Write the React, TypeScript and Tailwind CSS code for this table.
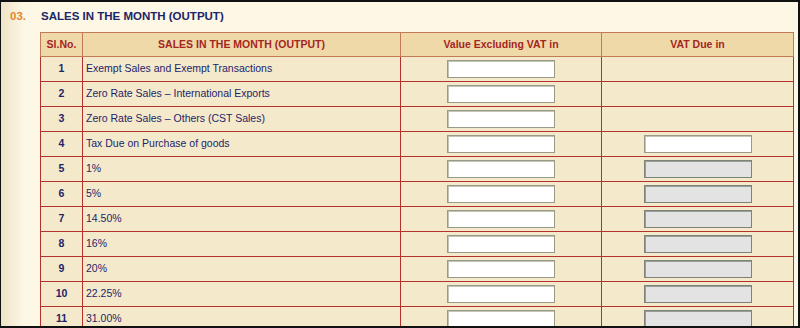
import React from "react";

type Row = { no: number; label: string; vatInput?: "open" | "locked" };

const rows: Row[] = [
  { no: 1, label: "Exempt Sales and Exempt Transactions" },
  { no: 2, label: "Zero Rate Sales \u2013 International Exports" },
  { no: 3, label: "Zero Rate Sales \u2013 Others (CST Sales)" },
  { no: 4, label: "Tax Due on Purchase of goods", vatInput: "open" },
  { no: 5, label: "1%", vatInput: "locked" },
  { no: 6, label: "5%", vatInput: "locked" },
  { no: 7, label: "14.50%", vatInput: "locked" },
  { no: 8, label: "16%", vatInput: "locked" },
  { no: 9, label: "20%", vatInput: "locked" },
  { no: 10, label: "22.25%", vatInput: "locked" },
  { no: 11, label: "31.00%", vatInput: "locked" },
];

function Field({ locked = false }: { locked?: boolean }) {
  return (
    <input
      type="text"
      disabled={locked}
      className={
        "block mx-auto w-[108px] h-[18px] border outline-none " +
        (locked
          ? "bg-[#e3e3e3] border-[#7d837a] shadow-[inset_1px_1px_0_#9a9f96]"
          : "bg-white border-[#9a9a88] shadow-[inset_1px_1px_0_#c4c4b4]")
      }
    />
  );
}

export default function App() {
  return (
    <div
      className="w-[800px] h-[328px] overflow-hidden box-border border-t-2 border-b-2 border-l border-r-2 border-[#111] bg-[#fdf7e6]"
      style={{ fontFamily: '"Liberation Sans", Arial, sans-serif' }}
    >
      <div className="h-full bg-gradient-to-r from-[#efe4c6] via-[#fdf7e6] via-[3%] to-[#fdf7e6]">
        {/* section title */}
        <div className="flex items-center h-[30px] text-[11.5px] font-bold">
          <span className="w-[40px] pl-[9px] text-[#e8862e]">03.</span>
          <span className="text-[#1c2468]">SALES IN THE MONTH (OUTPUT)</span>
        </div>

        <table className="ml-[39px] w-[753px] table-fixed border-collapse text-[10.5px]">
          <colgroup>
            <col className="w-[42px]" />
            <col className="w-[318px]" />
            <col className="w-[201px]" />
            <col className="w-[192px]" />
          </colgroup>
          <thead>
            <tr className="h-[24px] bg-[#f0d9a9] text-[#a3261f] font-bold">
              <th className="border border-[#c47a55]">Sl.No.</th>
              <th className="border border-[#c47a55]">SALES IN THE MONTH (OUTPUT)</th>
              <th className="border border-[#c47a55]">Value Excluding VAT in</th>
              <th className="border border-[#c47a55]">VAT Due in</th>
            </tr>
          </thead>
          <tbody className="bg-[#f5e9cb] text-[#1c2468]">
            {rows.map((r) => (
              <tr key={r.no} className="h-[25px]">
                <td className="border border-[#b3322b] text-center font-bold">{r.no}</td>
                <td className="border border-[#b3322b] pl-[3px]">{r.label}</td>
                <td className="border border-[#b3322b]">
                  <Field />
                </td>
                <td className="border border-[#b3322b]">
                  {r.vatInput && <Field locked={r.vatInput === "locked"} />}
                </td>
              </tr>
            ))}
          </tbody>
        </table>
      </div>
    </div>
  );
}
